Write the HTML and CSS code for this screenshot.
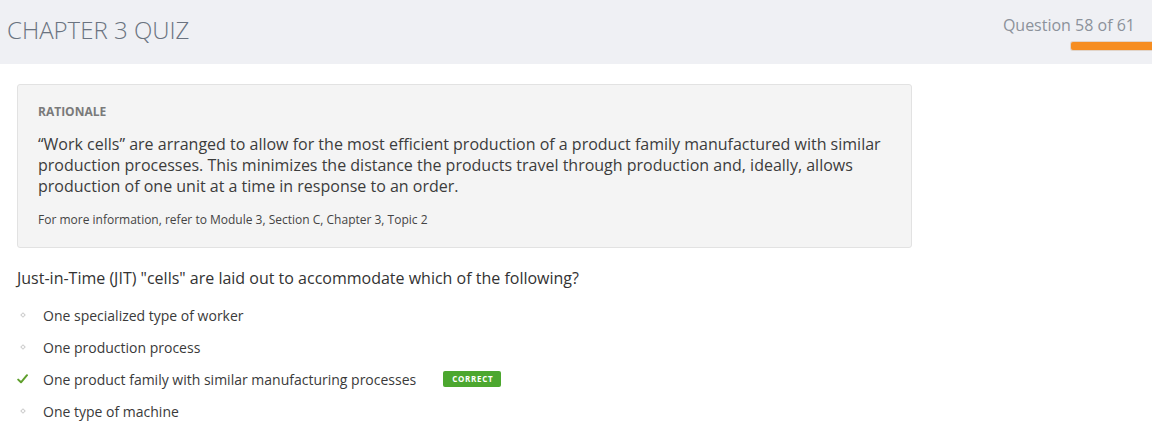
FILE: index.html
```html
<!DOCTYPE html>
<html>
<head>
<meta charset="utf-8">
<link rel="stylesheet" href="styles.css">
</head>
<body>
<header class="topbar">
  <h1 class="title">CHAPTER 3 QUIZ</h1>
  <div class="progress">
    <div class="progress-label">Question 58 of 61</div>
    <div class="progress-bar"></div>
  </div>
</header>
<main class="content">
  <section class="rationale">
    <div class="rationale-head">RATIONALE</div>
    <p class="rationale-text">“Work cells” are arranged to allow for the most efficient production of a product family manufactured with similar production processes. This minimizes the distance the products travel through production and, ideally, allows production of one unit at a time in response to an order.</p>
    <p class="rationale-ref">For more information, refer to Module 3, Section C, Chapter 3, Topic 2</p>
  </section>
  <div class="question">Just-in-Time (JIT) "cells" are laid out to accommodate which of the following?</div>
  <ul class="options">
    <li class="option"><span class="marker"><span class="dot"></span></span><span class="opt-text">One specialized type of worker</span></li>
    <li class="option"><span class="marker"><span class="dot"></span></span><span class="opt-text">One production process</span></li>
    <li class="option"><span class="marker"><svg class="check" width="11" height="10" viewBox="0 0 11 10"><path d="M1.2 5.6 L4 8.3 L10 1.2" fill="none" stroke="#5f9f2c" stroke-width="2" stroke-linecap="round" stroke-linejoin="round"/></svg></span><span class="opt-text">One product family with similar manufacturing processes</span><span class="badge">CORRECT</span></li>
    <li class="option"><span class="marker"><span class="dot"></span></span><span class="opt-text">One type of machine</span></li>
  </ul>
</main>
</body>
</html>
```

FILE: styles.css
```css
html, body {
  margin: 0;
  padding: 0;
  background: #ffffff;
  font-family: "Open Sans", "Liberation Sans", sans-serif;
  color: #333;
}
.topbar {
  height: 64px;
  background: #eff0f4;
  display: flex;
  justify-content: space-between;
  align-items: flex-start;
}
.title {
  margin: 0;
  padding: 14px 0 0 7px;
  font-weight: 300;
  font-size: 24px;
  line-height: 32px;
  color: #6a7380;
  letter-spacing: 0;
}
.progress {
  display: flex;
  flex-direction: column;
  align-items: flex-end;
  padding-top: 14px;
}
.progress-label {
  font-size: 16px;
  line-height: 22px;
  color: #8c929b;
  padding-right: 17px;
}
.progress-bar {
  margin-top: 6px;
  width: 81px;
  height: 8px;
  background: #f68d20;
  border-radius: 2px 0 0 2px;
  box-shadow: 0 0 0 1px rgba(200, 160, 120, 0.35);
}
.content {
  padding: 20px 17px 0 17px;
}
.rationale {
  width: 853px;
  background: #f4f4f4;
  border: 1px solid #e2e2e2;
  border-radius: 3px;
  padding: 17px 20px 18px 20px;
}
.rationale-head {
  font-size: 12px;
  font-weight: 700;
  color: #7a7a7a;
  line-height: 20px;
}
.rationale-text {
  margin: 12px 0 0 0;
  font-size: 16px;
  line-height: 21px;
  color: #3c3c3c;
}
.rationale-ref {
  margin: 14px 0 0 0;
  font-size: 12px;
  line-height: 18px;
  color: #444;
}
.question {
  margin-top: 19px;
  font-size: 16px;
  line-height: 22px;
  color: #333;
}
.options {
  list-style: none;
  margin: 10px 0 0 0;
  padding: 0;
}
.option {
  display: flex;
  align-items: center;
  height: 32px;
  font-size: 14px;
  color: #3a3a3a;
}
.marker {
  width: 26px;
  display: flex;
  justify-content: flex-start;
  align-items: center;
}
.dot {
  margin-left: 4px;
  width: 2px;
  height: 2px;
  border: 1px solid #cccccc;
  transform: rotate(45deg);
}
.check {
  display: block;
  margin-left: 0;
}
.badge {
  margin-left: 27px;
  background: #4ca72f;
  color: #fff;
  font-size: 8px;
  font-weight: 700;
  letter-spacing: 0.7px;
  line-height: 16px;
  padding: 0 8px 0 9px;
  border-radius: 2px;
}
```
